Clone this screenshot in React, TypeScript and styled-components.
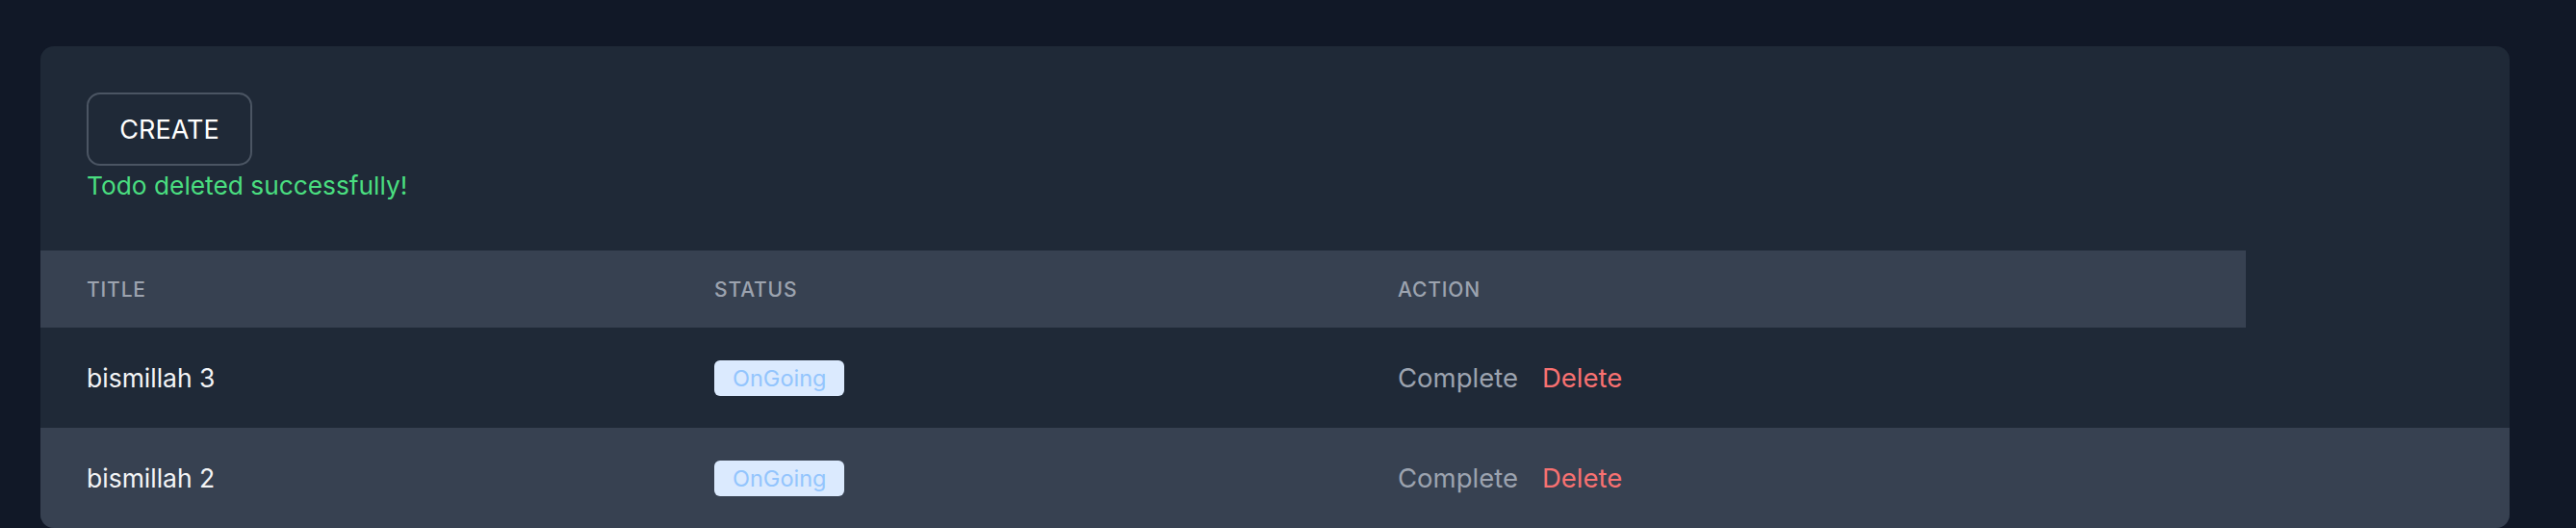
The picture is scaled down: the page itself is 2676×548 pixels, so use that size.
import React, {FC} from 'react';
import styled, {createGlobalStyle} from "styled-components";

const GlobalStyle = createGlobalStyle`
  html, body {
    margin: 0;
    padding: 0;
    background: #111827;
    font-family: Inter, "Liberation Sans", sans-serif;
  }
`
const Page = styled.div`
  padding: 48px 0 0 42px;
`
const Card = styled.div`
  width: 2565px;
  height: 500px;
  background: #1F2937;
  border-radius: 14px;
  overflow: hidden;
`
const Top = styled.div`
  display: flex;
  flex-direction: column;
  align-items: flex-start;
  padding: 48px 48px 48px 48px;
`
const CreateButton = styled.button`
  display: flex;
  justify-content: center;
  align-items: center;
  width: 172px;
  height: 76px;
  background: transparent;
  border: 2px solid #4B5563;
  border-radius: 14px;
  box-sizing: border-box;
  font-family: Inter, "Liberation Sans", sans-serif;
  font-size: 27px;
  font-weight: 400;
  color: #FFFFFF;
  padding: 0;
`
const Message = styled.div`
  font-size: 26.3px;
  line-height: 39px;
  color: #4ADE80;
  margin-top: 1px;
`
const Columns = styled.div`
  display: grid;
  grid-template-columns: 652px 710px 929px;
  align-items: center;
`
const HeadRow = styled(Columns)`
  width: 2291px;
  height: 80px;
  background: #374151;
`
const HeadCell = styled.div`
  padding-left: 48px;
  font-size: 21px;
  font-weight: 500;
  letter-spacing: 0.04em;
  text-transform: uppercase;
  color: #9CA3AF;
`
const Row = styled(Columns)<{striped: boolean}>`
  height: 104px;
  background: ${props => props.striped ? '#374151' : 'transparent'};
`
const Cell = styled.div`
  display: flex;
  align-items: center;
  gap: 25px;
  padding-left: 48px;
  font-size: 26.5px;
  color: #F3F4F6;
`
const Badge = styled.span`
  display: inline-block;
  padding: 0 19px;
  line-height: 37px;
  border-radius: 6px;
  background: #DBEAFE;
  color: #93C5FD;
  font-size: 23.5px;
`
const ActionLink = styled.span<{color: string}>`
  color: ${props => props.color};
  font-size: 27.5px;
  cursor: pointer;
`

const todos = [
    {title: 'bismillah 3', status: 'OnGoing'},
    {title: 'bismillah 2', status: 'OnGoing'},
]

const App: FC = () => {
    return (
        <Page>
            <GlobalStyle/>
            <Card>
                <Top>
                    <CreateButton>CREATE</CreateButton>
                    <Message>Todo deleted successfully!</Message>
                </Top>
                <HeadRow>
                    <HeadCell>Title</HeadCell>
                    <HeadCell>Status</HeadCell>
                    <HeadCell>Action</HeadCell>
                </HeadRow>
                {todos.map((todo, i) => (
                    <Row key={todo.title} striped={i % 2 === 1}>
                        <Cell>{todo.title}</Cell>
                        <Cell><Badge>{todo.status}</Badge></Cell>
                        <Cell>
                            <ActionLink color="#9CA3AF">Complete</ActionLink>
                            <ActionLink color="#F87171">Delete</ActionLink>
                        </Cell>
                    </Row>
                ))}
            </Card>
        </Page>
    );
};

export default App;
